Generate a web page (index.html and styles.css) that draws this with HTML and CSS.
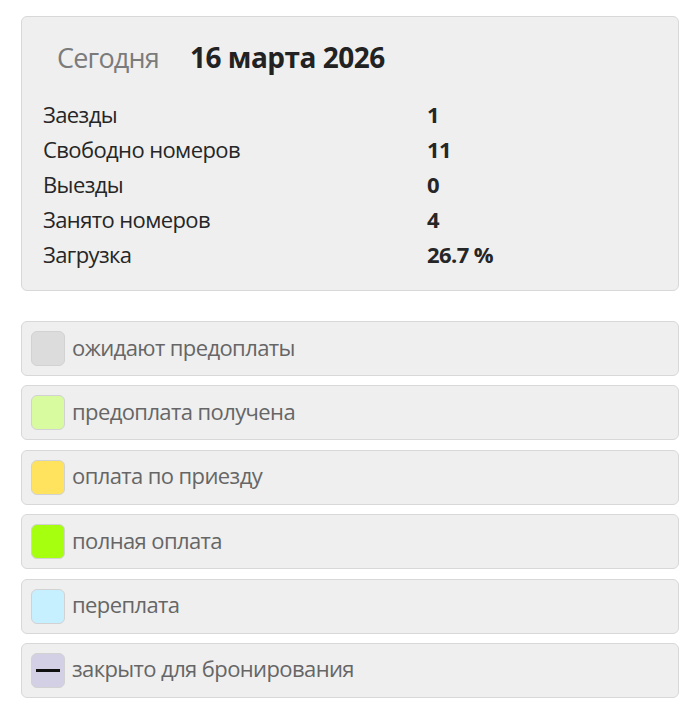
FILE: index.html
```html
<!DOCTYPE html>
<html lang="ru">
<head>
<meta charset="utf-8">
<link rel="stylesheet" href="styles.css">
</head>
<body>
<div class="page">
  <section class="today">
    <div class="today-head">
      <span class="today-label">Сегодня</span>
      <span class="today-date">16 марта 2026</span>
    </div>
    <div class="stats">
      <div class="stat-name">Заезды</div><div class="stat-val">1</div>
      <div class="stat-name">Свободно номеров</div><div class="stat-val">11</div>
      <div class="stat-name">Выезды</div><div class="stat-val">0</div>
      <div class="stat-name">Занято номеров</div><div class="stat-val">4</div>
      <div class="stat-name">Загрузка</div><div class="stat-val">26.7 %</div>
    </div>
  </section>
  <ul class="legend">
    <li class="legend-item"><span class="swatch sw-wait"></span><span class="legend-text">ожидают предоплаты</span></li>
    <li class="legend-item"><span class="swatch sw-prepaid"></span><span class="legend-text">предоплата получена</span></li>
    <li class="legend-item"><span class="swatch sw-arrival"></span><span class="legend-text">оплата по приезду</span></li>
    <li class="legend-item"><span class="swatch sw-full"></span><span class="legend-text">полная оплата</span></li>
    <li class="legend-item"><span class="swatch sw-over"></span><span class="legend-text">переплата</span></li>
    <li class="legend-item"><span class="swatch sw-closed"><span class="dash"></span></span><span class="legend-text">закрыто для бронирования</span></li>
  </ul>
</div>
</body>
</html>
```
FILE: styles.css
```css
* { box-sizing: border-box; }
html, body { margin: 0; padding: 0; background: #fff; }
body { font-family: "Open Sans", "Noto Sans", sans-serif; }
.page { padding: 16px 21px 0 21px; }
.today {
  background: #efefef;
  border: 1px solid #d8d8d8;
  border-radius: 6px;
  padding: 20px 21px 18px 21px;
}
.today-head { display: flex; align-items: baseline; gap: 31px; padding-left: 14px; height: 40px; line-height: 40px; }
.today-label { font-size: 27px; color: #7b7b7b; letter-spacing: -0.8px; }
.today-date { font-size: 28px; font-weight: 700; color: #222; letter-spacing: -0.5px; }
.stats {
  margin-top: 20px;
  display: grid;
  grid-template-columns: 384px 1fr;
  grid-auto-rows: 35px;
  line-height: 35px;
  font-size: 22px;
  letter-spacing: -0.6px;
  color: #262626;
}
.stat-val { font-weight: 700; }
.legend { list-style: none; margin: 30px 0 0 0; padding: 0; display: flex; flex-direction: column; gap: 9.4px; }
.legend-item {
  height: 55px;
  background: #efefef;
  border: 1px solid #d8d8d8;
  border-radius: 6px;
  display: flex; align-items: center;
  padding-left: 9px;
}
.swatch {
  flex: none;
  width: 34px; height: 35px; border-radius: 6px;
  border: 1px solid #d2d2d2;
  display: flex; align-items: center; justify-content: center;
  margin-right: 7px;
}
.sw-wait { background: #dcdcdc; }
.sw-prepaid { background: #d9fb9f; }
.sw-arrival { background: #ffe35f; }
.sw-full { background: #a6ff0e; }
.sw-over { background: #c6efff; }
.sw-closed { background: #d3d0e6; }
.dash { width: 24px; height: 3px; background: #111; }
.legend-text { font-size: 22px; letter-spacing: -0.6px; color: #666; line-height: 30px; padding-bottom: 4px; }
```
